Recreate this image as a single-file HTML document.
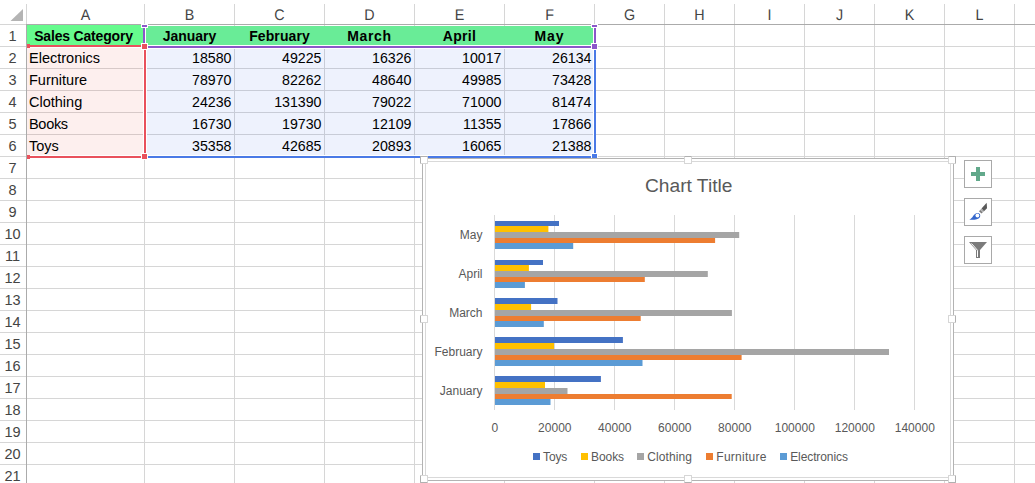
<!DOCTYPE html><html><head><meta charset="utf-8"><title>Sheet</title><style>
html,body{margin:0;padding:0;background:#fff}
body{width:1035px;height:483px;overflow:hidden;position:relative;font-family:"Liberation Sans", sans-serif;color:#000}
div,span{position:absolute;box-sizing:border-box;white-space:nowrap}
.v{width:1px;top:4px;height:479px;background:#d6d6d6}
.h{height:1px;left:0;width:1035px;background:#d6d6d6}
.ch{top:5px;height:22px;line-height:22px;text-align:center;font-size:15.4px;color:#444;text-rendering:geometricPrecision;transform:scaleX(.93)}
.rh{left:0;width:25px;height:22px;line-height:22px;text-align:center;font-size:14.5px;color:#444}
.c{height:22px;line-height:22px;font-size:14.5px;color:#000}
.hd{font-weight:bold;text-align:center;font-size:14px}
.n{text-align:right;padding-right:2.5px;font-size:14.2px}
.t{padding-left:2px}
.btn{width:28px;height:28px;left:964px;border:1px solid #a9a9a9;background:#fff}
svg{position:absolute;overflow:visible}
</style></head><body>
<div class="ch" style="left:27px;width:117px">A</div>
<div class="ch" style="left:145px;width:89px">B</div>
<div class="ch" style="left:235px;width:89px">C</div>
<div class="ch" style="left:325px;width:89px">D</div>
<div class="ch" style="left:415px;width:89px">E</div>
<div class="ch" style="left:505px;width:89px">F</div>
<div class="ch" style="left:595px;width:69px">G</div>
<div class="ch" style="left:665px;width:69px">H</div>
<div class="ch" style="left:735px;width:69px">I</div>
<div class="ch" style="left:805px;width:69px">J</div>
<div class="ch" style="left:875px;width:69px">K</div>
<div class="ch" style="left:945px;width:69px">L</div>
<div class="rh" style="top:25px">1</div>
<div class="rh" style="top:47px">2</div>
<div class="rh" style="top:69px">3</div>
<div class="rh" style="top:91px">4</div>
<div class="rh" style="top:113px">5</div>
<div class="rh" style="top:135px">6</div>
<div class="rh" style="top:157px">7</div>
<div class="rh" style="top:179px">8</div>
<div class="rh" style="top:201px">9</div>
<div class="rh" style="top:223px">10</div>
<div class="rh" style="top:245px">11</div>
<div class="rh" style="top:267px">12</div>
<div class="rh" style="top:289px">13</div>
<div class="rh" style="top:311px">14</div>
<div class="rh" style="top:333px">15</div>
<div class="rh" style="top:355px">16</div>
<div class="rh" style="top:377px">17</div>
<div class="rh" style="top:399px">18</div>
<div class="rh" style="top:421px">19</div>
<div class="rh" style="top:443px">20</div>
<div class="rh" style="top:465px">21</div>
<svg style="left:0;top:0" width="27" height="25"><polygon points="23,9 23,21 10.5,21" fill="#b4b4b4"/></svg>
<div class="v" style="left:26px"></div>
<div class="v" style="left:144px"></div>
<div class="v" style="left:234px"></div>
<div class="v" style="left:324px"></div>
<div class="v" style="left:414px"></div>
<div class="v" style="left:504px"></div>
<div class="v" style="left:594px"></div>
<div class="v" style="left:664px"></div>
<div class="v" style="left:734px"></div>
<div class="v" style="left:804px"></div>
<div class="v" style="left:874px"></div>
<div class="v" style="left:944px"></div>
<div class="v" style="left:1014px"></div>
<div class="h" style="top:24px"></div>
<div class="h" style="top:46px"></div>
<div class="h" style="top:68px"></div>
<div class="h" style="top:90px"></div>
<div class="h" style="top:112px"></div>
<div class="h" style="top:134px"></div>
<div class="h" style="top:156px"></div>
<div class="h" style="top:178px"></div>
<div class="h" style="top:200px"></div>
<div class="h" style="top:222px"></div>
<div class="h" style="top:244px"></div>
<div class="h" style="top:266px"></div>
<div class="h" style="top:288px"></div>
<div class="h" style="top:310px"></div>
<div class="h" style="top:332px"></div>
<div class="h" style="top:354px"></div>
<div class="h" style="top:376px"></div>
<div class="h" style="top:398px"></div>
<div class="h" style="top:420px"></div>
<div class="h" style="top:442px"></div>
<div class="h" style="top:464px"></div>
<div class="h" style="top:486px"></div>
<div style="left:26px;top:24px;width:1009px;height:1px;background:#ababab"></div>
<div style="left:26px;top:25px;width:1px;height:458px;background:#ababab"></div>
<div style="left:27px;top:25px;width:116px;height:20px;background:#66fb8d"></div>
<div style="left:146px;top:26px;width:447px;height:19px;background:#69ec97"></div>
<div style="left:27px;top:48px;width:116px;height:107px;background:rgba(235,80,70,0.09)"></div>
<div style="left:147px;top:49px;width:446px;height:106px;background:rgba(70,110,230,0.09)"></div>
<div class="c hd" style="left:27px;top:25px;width:117px;letter-spacing:-0.18px;padding-right:4px">Sales Category</div>
<div class="c hd" style="left:145px;top:25px;width:89px;letter-spacing:0.00px;padding-right:0px">January</div>
<div class="c hd" style="left:235px;top:25px;width:89px;letter-spacing:0.10px;padding-right:0px">February</div>
<div class="c hd" style="left:325px;top:25px;width:89px;letter-spacing:0.70px;padding-right:0px">March</div>
<div class="c hd" style="left:415px;top:25px;width:89px;letter-spacing:0.30px;padding-right:0px">April</div>
<div class="c hd" style="left:505px;top:25px;width:89px;letter-spacing:0.90px;padding-right:0px">May</div>
<div class="c t" style="left:27px;top:47px;width:117px">Electronics</div>
<div class="c n" style="left:145px;top:47px;width:89px">18580</div>
<div class="c n" style="left:235px;top:47px;width:89px">49225</div>
<div class="c n" style="left:325px;top:47px;width:89px">16326</div>
<div class="c n" style="left:415px;top:47px;width:89px">10017</div>
<div class="c n" style="left:505px;top:47px;width:89px">26134</div>
<div class="c t" style="left:27px;top:69px;width:117px">Furniture</div>
<div class="c n" style="left:145px;top:69px;width:89px">78970</div>
<div class="c n" style="left:235px;top:69px;width:89px">82262</div>
<div class="c n" style="left:325px;top:69px;width:89px">48640</div>
<div class="c n" style="left:415px;top:69px;width:89px">49985</div>
<div class="c n" style="left:505px;top:69px;width:89px">73428</div>
<div class="c t" style="left:27px;top:91px;width:117px">Clothing</div>
<div class="c n" style="left:145px;top:91px;width:89px">24236</div>
<div class="c n" style="left:235px;top:91px;width:89px">131390</div>
<div class="c n" style="left:325px;top:91px;width:89px">79022</div>
<div class="c n" style="left:415px;top:91px;width:89px">71000</div>
<div class="c n" style="left:505px;top:91px;width:89px">81474</div>
<div class="c t" style="left:27px;top:113px;width:117px;letter-spacing:-0.3px">Books</div>
<div class="c n" style="left:145px;top:113px;width:89px">16730</div>
<div class="c n" style="left:235px;top:113px;width:89px">19730</div>
<div class="c n" style="left:325px;top:113px;width:89px">12109</div>
<div class="c n" style="left:415px;top:113px;width:89px">11355</div>
<div class="c n" style="left:505px;top:113px;width:89px">17866</div>
<div class="c t" style="left:27px;top:135px;width:117px">Toys</div>
<div class="c n" style="left:145px;top:135px;width:89px">35358</div>
<div class="c n" style="left:235px;top:135px;width:89px">42685</div>
<div class="c n" style="left:325px;top:135px;width:89px">20893</div>
<div class="c n" style="left:415px;top:135px;width:89px">16065</div>
<div class="c n" style="left:505px;top:135px;width:89px">21388</div>
<div style="left:146px;top:45px;width:447px;height:1px;background:#fff"></div>
<div style="left:147px;top:48px;width:446px;height:1px;background:#fff"></div>
<div style="left:27px;top:47px;width:116px;height:1px;background:#fff"></div>
<div style="left:27px;top:155px;width:116px;height:1px;background:#fff"></div>
<div style="left:147px;top:155px;width:446px;height:1px;background:#fff"></div>
<div style="left:593px;top:26px;width:1px;height:130px;background:#fff"></div>
<div style="left:146px;top:48px;width:1px;height:108px;background:#fff"></div>
<div style="left:143px;top:48px;width:1px;height:108px;background:#fff"></div>
<div style="left:30px;top:45px;width:111px;height:2px;background:#e9515c"></div>
<div style="left:30px;top:156px;width:111px;height:2px;background:#e9515c"></div>
<div style="left:144px;top:50px;width:2px;height:104px;background:#e9515c"></div>
<div style="left:141px;top:43px;width:7px;height:7px;background:#fff"></div>
<div style="left:142px;top:44px;width:5px;height:5px;background:#e9515c"></div>
<div style="left:141px;top:153px;width:7px;height:7px;background:#fff"></div>
<div style="left:142px;top:154px;width:5px;height:5px;background:#e9515c"></div>
<div style="left:27px;top:44px;width:3px;height:4px;background:#e9515c"></div>
<div style="left:27px;top:155px;width:3px;height:4px;background:#e9515c"></div>
<div style="left:143px;top:27px;width:2px;height:16px;background:#8b57c9"></div>
<div style="left:141px;top:24px;width:7px;height:4px;background:#fff"></div>
<div style="left:142px;top:25px;width:5px;height:2px;background:#8b57c9"></div>
<div style="left:148px;top:46px;width:443px;height:2px;background:#8b57c9"></div>
<div style="left:594px;top:27px;width:2px;height:16px;background:#8b57c9"></div>
<div style="left:591px;top:24px;width:7px;height:4px;background:#fff"></div>
<div style="left:592px;top:25px;width:5px;height:2px;background:#8b57c9"></div>
<div style="left:591px;top:43px;width:7px;height:7px;background:#fff"></div>
<div style="left:592px;top:44px;width:5px;height:5px;background:#8b57c9"></div>
<div style="left:594px;top:50px;width:2px;height:103px;background:#4a7ae6"></div>
<div style="left:148px;top:156px;width:443px;height:2px;background:#4a7ae6"></div>
<div style="left:591px;top:153px;width:7px;height:6px;background:#fff"></div>
<div style="left:592px;top:154px;width:5px;height:4px;background:#4a7ae6"></div>
<div style="left:422px;top:158px;width:532px;height:323px;background:#fff;border:1px solid #b3b3b3"></div>
<div style="left:425px;top:161px;width:526px;height:317px;background:#fff;border:1px solid #d9d9d9"></div>
<div style="left:420px;top:156px;width:8px;height:8px;background:#fff;border:1px solid;border-color:#b0b0b0 #d6d6d6 #d6d6d6 #b0b0b0;border-radius:1px"></div>
<div style="left:684px;top:156px;width:8px;height:8px;background:#fff;border:1px solid;border-color:#b0b0b0 #d6d6d6 #d6d6d6 #d6d6d6;border-radius:1px"></div>
<div style="left:948px;top:156px;width:8px;height:8px;background:#fff;border:1px solid;border-color:#b0b0b0 #b0b0b0 #d6d6d6 #d6d6d6;border-radius:1px"></div>
<div style="left:420px;top:315px;width:8px;height:8px;background:#fff;border:1px solid;border-color:#d6d6d6 #d6d6d6 #d6d6d6 #b0b0b0;border-radius:1px"></div>
<div style="left:948px;top:315px;width:8px;height:8px;background:#fff;border:1px solid;border-color:#d6d6d6 #b0b0b0 #d6d6d6 #d6d6d6;border-radius:1px"></div>
<div style="left:420px;top:475px;width:8px;height:8px;background:#fff;border:1px solid;border-color:#d6d6d6 #d6d6d6 #b0b0b0 #b0b0b0;border-radius:1px"></div>
<div style="left:684px;top:475px;width:8px;height:8px;background:#fff;border:1px solid;border-color:#d6d6d6 #d6d6d6 #b0b0b0 #d6d6d6;border-radius:1px"></div>
<div style="left:948px;top:475px;width:8px;height:8px;background:#fff;border:1px solid;border-color:#d6d6d6 #b0b0b0 #b0b0b0 #d6d6d6;border-radius:1px"></div>
<svg style="left:0;top:0" width="1035" height="483" fill="#595959">
<rect x="494" y="215" width="1" height="195" fill="#d9d9d9" shape-rendering="crispEdges"/>
<rect x="554" y="215" width="1" height="195" fill="#d9d9d9" shape-rendering="crispEdges"/>
<rect x="614" y="215" width="1" height="195" fill="#d9d9d9" shape-rendering="crispEdges"/>
<rect x="674" y="215" width="1" height="195" fill="#d9d9d9" shape-rendering="crispEdges"/>
<rect x="734" y="215" width="1" height="195" fill="#d9d9d9" shape-rendering="crispEdges"/>
<rect x="794" y="215" width="1" height="195" fill="#d9d9d9" shape-rendering="crispEdges"/>
<rect x="854" y="215" width="1" height="195" fill="#d9d9d9" shape-rendering="crispEdges"/>
<rect x="914" y="215" width="1" height="195" fill="#d9d9d9" shape-rendering="crispEdges"/>
<rect x="495" y="221" width="64.0" height="5" fill="#4472c4"/>
<rect x="495" y="226" width="53.4" height="6" fill="#ffc000"/>
<rect x="495" y="232" width="244.2" height="6" fill="#a5a5a5"/>
<rect x="495" y="238" width="220.1" height="5" fill="#ed7d31"/>
<rect x="495" y="243" width="78.2" height="6" fill="#5b9bd5"/>
<text x="482.5" y="239" text-anchor="end" font-size="12px">May</text>
<rect x="495" y="260" width="48.0" height="5" fill="#4472c4"/>
<rect x="495" y="265" width="33.9" height="6" fill="#ffc000"/>
<rect x="495" y="271" width="212.8" height="6" fill="#a5a5a5"/>
<rect x="495" y="277" width="149.8" height="5" fill="#ed7d31"/>
<rect x="495" y="282" width="29.9" height="6" fill="#5b9bd5"/>
<text x="482.5" y="278" text-anchor="end" font-size="12px">April</text>
<rect x="495" y="298" width="62.5" height="6" fill="#4472c4"/>
<rect x="495" y="304" width="36.1" height="6" fill="#ffc000"/>
<rect x="495" y="310" width="236.9" height="6" fill="#a5a5a5"/>
<rect x="495" y="316" width="145.7" height="5" fill="#ed7d31"/>
<rect x="495" y="321" width="48.8" height="6" fill="#5b9bd5"/>
<text x="482.5" y="317" text-anchor="end" font-size="12px">March</text>
<rect x="495" y="337" width="127.9" height="6" fill="#4472c4"/>
<rect x="495" y="343" width="59.0" height="6" fill="#ffc000"/>
<rect x="495" y="349" width="394.0" height="6" fill="#a5a5a5"/>
<rect x="495" y="355" width="246.6" height="5" fill="#ed7d31"/>
<rect x="495" y="360" width="147.5" height="6" fill="#5b9bd5"/>
<text x="482.5" y="356" text-anchor="end" font-size="12px">February</text>
<rect x="495" y="376" width="105.9" height="6" fill="#4472c4"/>
<rect x="495" y="382" width="50.0" height="6" fill="#ffc000"/>
<rect x="495" y="388" width="72.5" height="6" fill="#a5a5a5"/>
<rect x="495" y="394" width="236.7" height="5" fill="#ed7d31"/>
<rect x="495" y="399" width="55.5" height="6" fill="#5b9bd5"/>
<text x="482.5" y="395" text-anchor="end" font-size="12px">January</text>
<text x="494.8" y="432" text-anchor="middle" font-size="12px">0</text>
<text x="554.8" y="432" text-anchor="middle" font-size="12px">20000</text>
<text x="614.8" y="432" text-anchor="middle" font-size="12px">40000</text>
<text x="674.8" y="432" text-anchor="middle" font-size="12px">60000</text>
<text x="734.8" y="432" text-anchor="middle" font-size="12px">80000</text>
<text x="794.8" y="432" text-anchor="middle" font-size="12px">100000</text>
<text x="854.8" y="432" text-anchor="middle" font-size="12px">120000</text>
<text x="914.8" y="432" text-anchor="middle" font-size="12px">140000</text>
<text x="688.7" y="191.7" text-anchor="middle" font-size="19.2px">Chart Title</text>
<rect x="533" y="453" width="7" height="7" fill="#4472c4"/>
<text x="543.0" y="461" font-size="12px" letter-spacing="-0.10">Toys</text>
<rect x="581" y="453" width="7" height="7" fill="#ffc000"/>
<text x="591.1" y="461" font-size="12px" letter-spacing="-0.10">Books</text>
<rect x="637" y="453" width="7" height="7" fill="#a5a5a5"/>
<text x="647.2" y="461" font-size="12px" letter-spacing="0.10">Clothing</text>
<rect x="706" y="453" width="7" height="7" fill="#ed7d31"/>
<text x="716.3" y="461" font-size="12px" letter-spacing="0.25">Furniture</text>
<rect x="780" y="453" width="7" height="7" fill="#5b9bd5"/>
<text x="790.2" y="461" font-size="12px" letter-spacing="-0.10">Electronics</text>
</svg>
<div class="btn" style="top:160px"><svg style="left:-1px;top:-1px" width="28" height="28"><path d="M7 12h14v4H7zM12 7h4v14h-4z" fill="#62a98b"/></svg></div>
<div class="btn" style="top:198px"><svg style="left:-1px;top:-1px" width="28" height="28"><path d="M22.7 4.8L23 10.2L20 13.2L17.5 10.6Z" fill="#595959"/><path d="M17.2 11L19.7 13.5L17.4 15.6L15 13.3Z" fill="#7a7a7a"/><path d="M5.3 21.7C9 20.3 9.3 16 13 15.1C15.8 14.8 16.9 17.2 15.9 19.2C14.2 22 9 22 5.3 21.7Z" fill="#3567cc"/><circle cx="13.4" cy="17.5" r="1.9" fill="#fff"/><path d="M16.4 11.7L19 14.3" stroke="#fff" stroke-width="0.7"/></svg></div>
<div class="btn" style="top:236px"><svg style="left:-1px;top:-1px" width="28" height="28"><path d="M5 6H23L16 14V22H12V14Z" fill="#7b7b7b"/><path d="M7.5 7.5L13.5 14.3V21" stroke="#fff" stroke-width="1" fill="none"/></svg></div>
</body></html>
